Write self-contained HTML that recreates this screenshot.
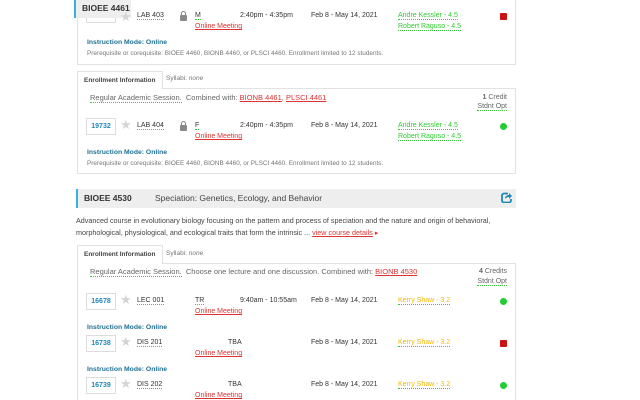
<!DOCTYPE html><html style="width:640px;height:400px;overflow:hidden"><head><style>
*{margin:0;padding:0;box-sizing:border-box}
body{width:640px;height:400px;overflow:hidden;background:#fff;font-family:"Liberation Sans",sans-serif;font-size:7px;color:#333;position:relative}
.a{position:absolute;white-space:nowrap}
.box{position:absolute;border:1px solid #e2e2e2}
.num{position:absolute;border:1px solid #ddd;width:30px;height:17px;color:#1e88b8;font-weight:bold;font-size:7px;text-align:center;line-height:15px;background:#fff}
.star{position:absolute;color:#d4d4d4;font-size:13px}
.dot{position:absolute;width:7px;height:7px;border-radius:50%;background:#22cc33}
.sq{position:absolute;width:7px;height:7px;background:#cc1111;border-radius:1px}
.red{color:#d33;text-decoration:underline}
.grn{color:#2ecc2e;border-bottom:1px dotted #3c3}
.yel{color:#f5b800;border-bottom:1px dotted #3c3}
.dl{border-bottom:1px dotted #3c3}
.im{color:#1e6f94;font-weight:bold;font-size:6.8px}
.pr{color:#777;font-size:6.4px}
.tab{position:absolute;border:1px solid #e2e2e2;border-bottom:none;background:#fff;font-weight:bold;font-size:6.5px;color:#444;padding:0 6px;line-height:17px}
.lock{position:absolute;width:7px;height:6px;background:#888;border-radius:1px}
.lock:before{content:"";position:absolute;left:1px;top:-4px;width:3px;height:4px;border:1px solid #888;border-bottom:none;border-radius:3px 3px 0 0}
</style></head><body>
<div class="box" style="left:77px;top:-2px;width:439px;height:67px"></div>
<div class="a" style="left:74px;top:0;width:57px;height:18px;background:#eee;border-left:2px solid #3bb0dd;font-weight:bold;font-size:8.5px;line-height:16px;padding-left:6px;color:#333">BIOEE 4461</div>
<div class="num" style="left:86px;top:18px;height:5px;border-top:none"></div>
<div class="star" style="left:120px;top:9px">★</div>
<div class="a" style="left:137px;top:12px"><span class="dl">LAB 403</span></div>
<div class="lock" style="left:180px;top:15px"></div>
<div class="a" style="left:195px;top:12px"><span class="dl">M</span></div>
<div class="a red" style="left:195px;top:23px">Online Meeting</div>
<div class="a" style="left:240px;top:12px">2:40pm - 4:35pm</div>
<div class="a" style="left:311px;top:12px">Feb 8 - May 14, 2021</div>
<div class="a" style="left:398px;top:12px"><span class="grn">Andre Kessler - 4.5</span></div>
<div class="a" style="left:398px;top:23px"><span class="grn">Robert Raguso - 4.5</span></div>
<div class="sq" style="left:500px;top:13px"></div>
<div class="a im" style="left:87px;top:39px">Instruction Mode: Online</div>
<div class="a pr" style="left:87px;top:50px">Prerequisite or corequisite: BIOEE 4460, BIONB 4460, or PLSCI 4460. Enrollment limited to 12 students.</div>
<div class="box" style="left:77px;top:88px;width:439px;height:86px"></div>
<div class="tab" style="left:77px;top:71px;height:18px">Enrollment Information</div>
<div class="a" style="left:166px;top:75px;color:#777;font-size:6.5px">Syllabi: <i>none</i></div>
<div class="a" style="left:90px;top:93px;font-size:7.5px;color:#666"><span class="dl">Regular Academic Session.</span>&nbsp; Combined with: <span class="red">BIONB 4461</span>, <span class="red">PLSCI 4461</span></div>
<div class="a" style="right:133px;top:94px;color:#666"><b>1</b> Credit</div>
<div class="a" style="right:133px;top:103px;color:#666"><span class="dl">Stdnt Opt</span></div>
<div class="num" style="left:86px;top:118px">19732</div>
<div class="star" style="left:120px;top:117px">★</div>
<div class="a" style="left:137px;top:122px"><span class="dl">LAB 404</span></div>
<div class="lock" style="left:180px;top:125px"></div>
<div class="a" style="left:195px;top:122px"><span class="dl">F</span></div>
<div class="a red" style="left:195px;top:133px">Online Meeting</div>
<div class="a" style="left:240px;top:122px">2:40pm - 4:35pm</div>
<div class="a" style="left:311px;top:122px">Feb 8 - May 14, 2021</div>
<div class="a" style="left:398px;top:122px"><span class="grn">Andre Kessler - 4.5</span></div>
<div class="a" style="left:398px;top:133px"><span class="grn">Robert Raguso - 4.5</span></div>
<div class="dot" style="left:500px;top:123px"></div>
<div class="a im" style="left:87px;top:149px">Instruction Mode: Online</div>
<div class="a pr" style="left:87px;top:160px">Prerequisite or corequisite: BIOEE 4460, BIONB 4460, or PLSCI 4460. Enrollment limited to 12 students.</div>
<div class="a" style="left:76px;top:189px;width:440px;height:19px;background:#eee;border-left:2px solid #3bb0dd"></div>
<div class="a" style="left:84px;top:193px;font-weight:bold;font-size:8.5px">BIOEE 4530</div>
<div class="a" style="left:155px;top:193px;font-size:8.5px;color:#444">Speciation: Genetics, Ecology, and Behavior</div>
<svg class="a" style="left:501px;top:192px" width="11" height="11" viewBox="0 0 11 11"><path d="M7 1.5H3a2 2 0 0 0-2 2v5a2 2 0 0 0 2 2h5a2 2 0 0 0 2-2V7" fill="none" stroke="#1e88b8" stroke-width="1.8"/><path d="M4 7c0-3 2-4 4-4V1l3 3-3 3V5c-2 0-3 1-4 2z" fill="#1e88b8"/></svg>
<div class="a" style="left:76px;top:216px;font-size:7.2px;color:#444">Advanced course in evolutionary biology focusing on the pattern and process of speciation and the nature and origin of behavioral,</div>
<div class="a" style="left:76px;top:228px;font-size:7.2px;color:#444">morphological, physiological, and ecological traits that form the intrinsic ... <span class="red">view course details</span> <span style="color:#d33">▸</span></div>
<div class="box" style="left:77px;top:263px;width:439px;height:150px"></div>
<div class="tab" style="left:77px;top:245px;height:19px">Enrollment Information</div>
<div class="a" style="left:166px;top:250px;color:#777;font-size:6.5px">Syllabi: <i>none</i></div>
<div class="a" style="left:90px;top:267px;font-size:7.5px;color:#666"><span class="dl">Regular Academic Session.</span>&nbsp; Choose one lecture and one discussion. Combined with: <span class="red">BIONB 4530</span></div>
<div class="a" style="right:133px;top:268px;color:#666"><b>4</b> Credits</div>
<div class="a" style="right:133px;top:278px;color:#666"><span class="dl">Stdnt Opt</span></div>
<div class="num" style="left:86px;top:293px">16678</div>
<div class="star" style="left:120px;top:292px">★</div>
<div class="a" style="left:137px;top:297px"><span class="dl">LEC 001</span></div>
<div class="a" style="left:195px;top:297px"><span class="dl">TR</span></div>
<div class="a red" style="left:195px;top:308px">Online Meeting</div>
<div class="a" style="left:240px;top:297px">9:40am - 10:55am</div>
<div class="a" style="left:311px;top:297px">Feb 8 - May 14, 2021</div>
<div class="a" style="left:398px;top:297px"><span class="yel">Kerry Shaw - 3.2</span></div>
<div class="dot" style="left:500px;top:298px"></div>
<div class="a im" style="left:87px;top:324px">Instruction Mode: Online</div>
<div class="num" style="left:86px;top:335px">16738</div>
<div class="star" style="left:120px;top:334px">★</div>
<div class="a" style="left:137px;top:339px"><span class="dl">DIS 201</span></div>
<div class="a" style="left:228px;top:339px">TBA</div>
<div class="a red" style="left:195px;top:350px">Online Meeting</div>
<div class="a" style="left:311px;top:339px">Feb 8 - May 14, 2021</div>
<div class="a" style="left:398px;top:339px"><span class="yel">Kerry Shaw - 3.2</span></div>
<div class="sq" style="left:500px;top:340px"></div>
<div class="a im" style="left:87px;top:366px">Instruction Mode: Online</div>
<div class="num" style="left:86px;top:377px">16739</div>
<div class="star" style="left:120px;top:376px">★</div>
<div class="a" style="left:137px;top:381px"><span class="dl">DIS 202</span></div>
<div class="a" style="left:228px;top:381px">TBA</div>
<div class="a red" style="left:195px;top:392px">Online Meeting</div>
<div class="a" style="left:311px;top:381px">Feb 8 - May 14, 2021</div>
<div class="a" style="left:398px;top:381px"><span class="yel">Kerry Shaw - 3.2</span></div>
<div class="dot" style="left:500px;top:382px"></div>
</body></html>
